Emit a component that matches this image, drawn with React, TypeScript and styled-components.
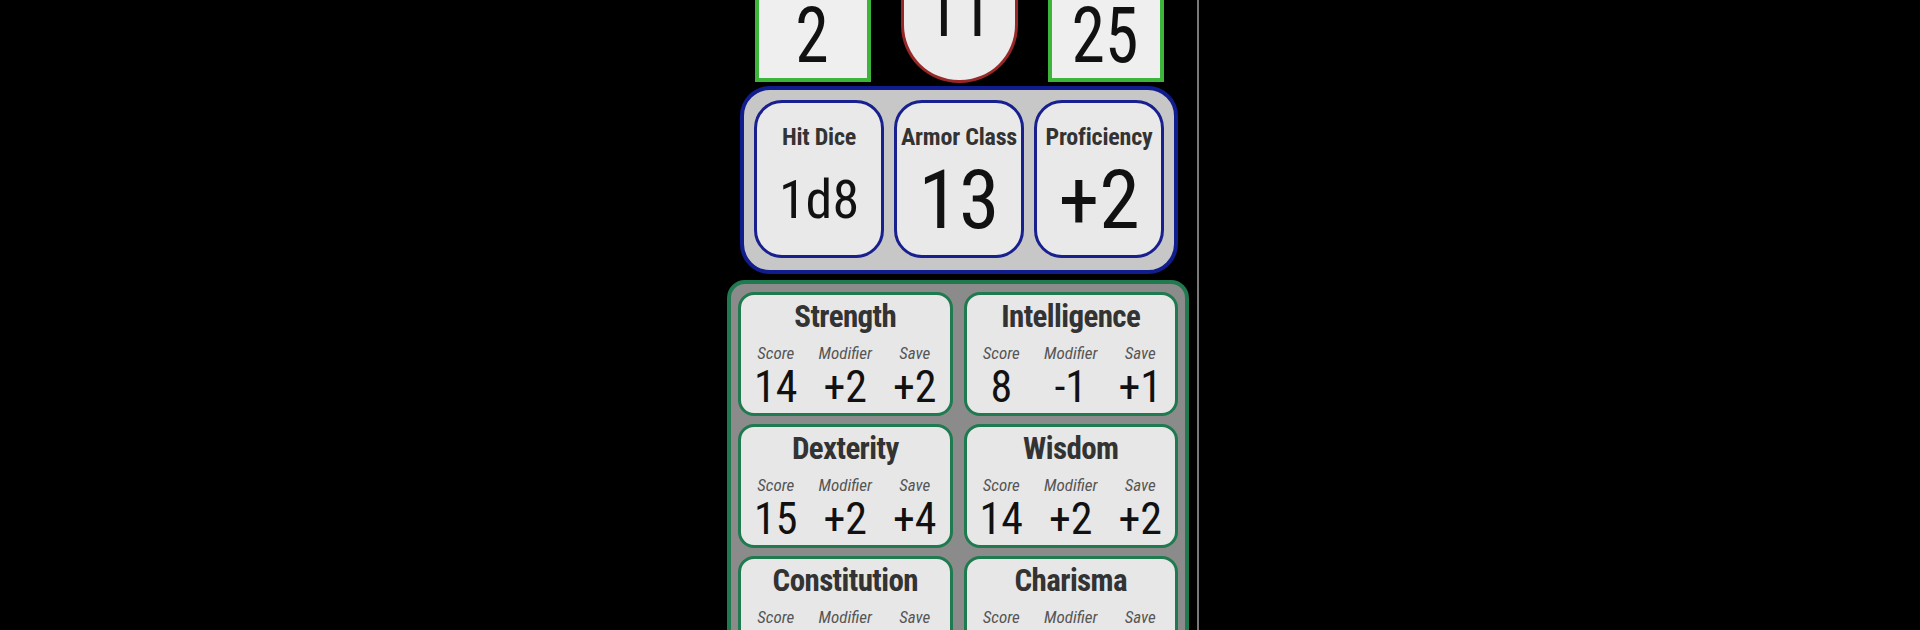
import React from "react";
import styled, { createGlobalStyle } from "styled-components";

/* Global */
const GlobalStyle = createGlobalStyle`
  html, body {
    margin: 0;
    padding: 0;
    background: #000;
  }
  body {
    font-family: "Roboto Condensed", Roboto, "Liberation Sans", sans-serif;
  }
`;

/* Styled Components */
const Page = styled.div`
  display: flex;
  justify-content: center;
  height: 630px;
  overflow: hidden;
  background: #000;
`;

const Screen = styled.div`
  box-sizing: border-box;
  width: 478px;
  height: 630px;
  border-right: 2px solid #787878;
  display: flex;
  flex-direction: column;
  overflow: hidden;

  & > * {
    flex-shrink: 0;
  }
`;

const TopRow = styled.div`
  display: flex;
  justify-content: center;
  align-items: flex-start;
  gap: 30px;
  height: 83px;
`;

const StatBox = styled.div`
  box-sizing: border-box;
  width: 116px;
  height: 82px;
  border: 4px solid #3db53a;
  border-top: none;
  background: #efefef;
  display: flex;
  align-items: flex-end;
  justify-content: center;
  padding-bottom: 3px;
  overflow: hidden;
`;

const Oval = styled.div`
  box-sizing: border-box;
  width: 117px;
  height: 83px;
  border: 3px solid #982828;
  border-top: none;
  border-radius: 0 0 58px 58px;
  background: #ececec;
  display: flex;
  align-items: flex-end;
  justify-content: center;
  padding-bottom: 31px;
  overflow: hidden;
`;

const BigNumber = styled.span`
  display: inline-block;
  font-size: 77px;
  line-height: 1;
  color: #111;
  transform: scaleX(0.88);
`;

const InfoPanel = styled.div`
  box-sizing: border-box;
  margin: 3px 19px 0;
  height: 188px;
  border: 4px solid #111d8d;
  border-radius: 30px;
  background: #c7c7c7;
  padding: 10px 10px 12px;
  display: grid;
  grid-template-columns: repeat(3, 1fr);
  gap: 10px;
`;

const InfoCard = styled.div`
  box-sizing: border-box;
  height: 158px;
  border: 3px solid #18208e;
  border-radius: 28px;
  background: #e9e9e9;
  display: flex;
  flex-direction: column;
  align-items: center;
  padding: 22px 0 4px;
`;

const InfoLabel = styled.div`
  font-size: 24px;
  font-weight: 700;
  line-height: 1;
  color: #333;
  white-space: nowrap;
  letter-spacing: -0.2px;
`;

const InfoValue = styled.div<{ $size: number }>`
  flex: 1;
  display: flex;
  align-items: center;
  font-size: ${(p) => p.$size}px;
  line-height: 1;
  color: #111;
`;

const AbilityPanel = styled.div`
  box-sizing: border-box;
  margin: 6px 8px 0 6px;
  border: 4px solid #1f7a50;
  border-radius: 18px;
  background: #8b8b8b;
  padding: 8px 7px;
  display: grid;
  grid-template-columns: repeat(2, 1fr);
  gap: 8px 11px;
`;

const AbilityCard = styled.div`
  box-sizing: border-box;
  height: 124px;
  border: 3px solid #1f7a50;
  border-radius: 16px;
  background: #e7e7e7;
  padding-top: 6px;
  display: flex;
  flex-direction: column;
`;

const AbilityName = styled.div`
  font-size: 31px;
  font-weight: 700;
  line-height: 1;
  color: #333;
  text-align: center;
  letter-spacing: -0.6px;
`;

const StatGrid = styled.div`
  display: grid;
  grid-template-columns: repeat(3, 1fr);
  margin-top: 13px;
`;

const StatCell = styled.div`
  display: flex;
  flex-direction: column;
  align-items: center;
`;

const StatLabel = styled.span`
  font-size: 17px;
  font-style: italic;
  line-height: 1;
  color: #555;
`;

const StatValue = styled.span`
  font-size: 44px;
  line-height: 1;
  margin-top: 3px;
  color: #111;
`;

/* Data */
const info = [
  { label: "Hit Dice", value: "1d8", size: 54 },
  { label: "Armor Class", value: "13", size: 82 },
  { label: "Proficiency", value: "+2", size: 82 },
];

const abilities = [
  { name: "Strength", score: "14", mod: "+2", save: "+2" },
  { name: "Intelligence", score: "8", mod: "-1", save: "+1" },
  { name: "Dexterity", score: "15", mod: "+2", save: "+4" },
  { name: "Wisdom", score: "14", mod: "+2", save: "+2" },
  { name: "Constitution", score: "12", mod: "+1", save: "+1" },
  { name: "Charisma", score: "10", mod: "+0", save: "+0" },
];

/* Components */
const Ability: React.FC<(typeof abilities)[number]> = ({ name, score, mod, save }) => (
  <AbilityCard>
    <AbilityName>{name}</AbilityName>
    <StatGrid>
      <StatCell>
        <StatLabel>Score</StatLabel>
        <StatValue>{score}</StatValue>
      </StatCell>
      <StatCell>
        <StatLabel>Modifier</StatLabel>
        <StatValue>{mod}</StatValue>
      </StatCell>
      <StatCell>
        <StatLabel>Save</StatLabel>
        <StatValue>{save}</StatValue>
      </StatCell>
    </StatGrid>
  </AbilityCard>
);

const App: React.FC = () => (
  <>
    <GlobalStyle />
    <Page>
      <Screen>
        <TopRow>
          <StatBox>
            <BigNumber>2</BigNumber>
          </StatBox>
          <Oval>
            <BigNumber>11</BigNumber>
          </Oval>
          <StatBox>
            <BigNumber>25</BigNumber>
          </StatBox>
        </TopRow>

        <InfoPanel>
          {info.map((item) => (
            <InfoCard key={item.label}>
              <InfoLabel>{item.label}</InfoLabel>
              <InfoValue $size={item.size}>{item.value}</InfoValue>
            </InfoCard>
          ))}
        </InfoPanel>

        <AbilityPanel>
          {abilities.map((a) => (
            <Ability key={a.name} {...a} />
          ))}
        </AbilityPanel>
      </Screen>
    </Page>
  </>
);

export default App;
